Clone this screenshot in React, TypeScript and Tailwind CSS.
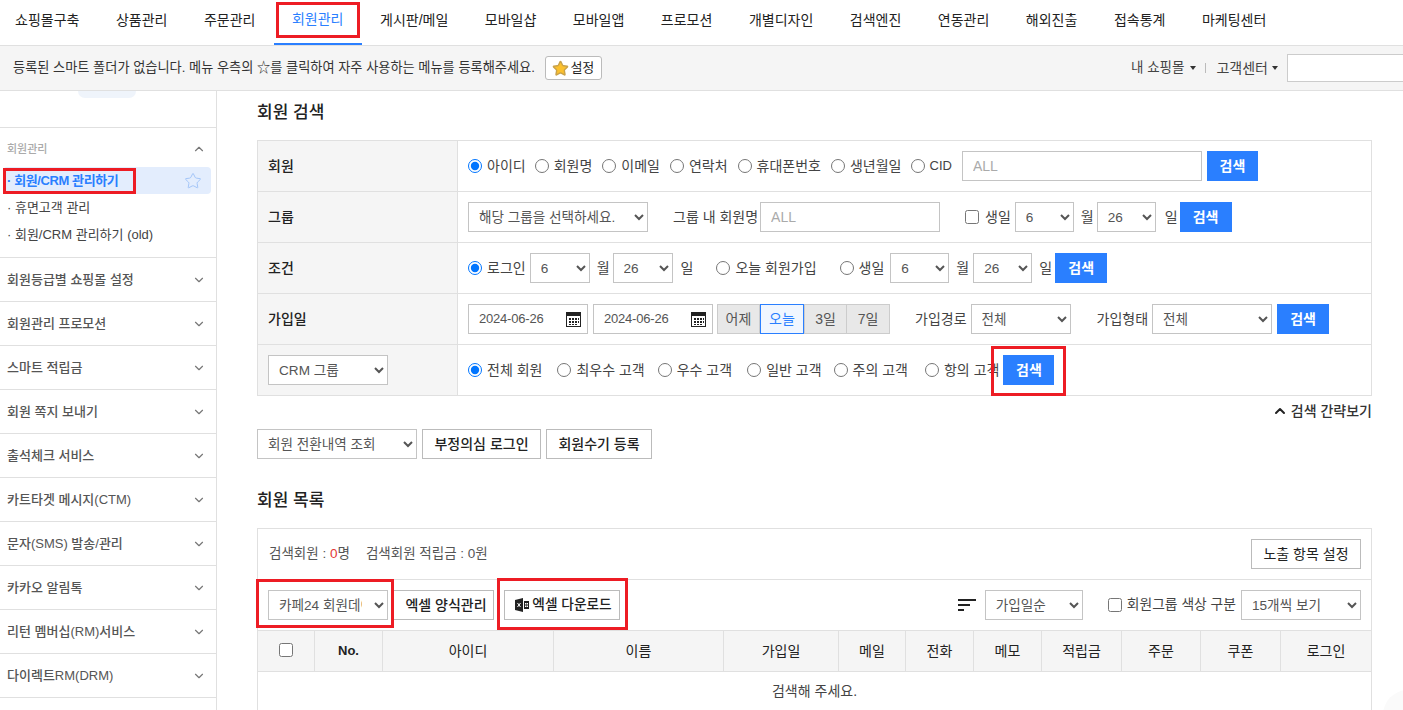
import { ChevronDown, ChevronUp, Star } from 'lucide-react'

const navItems = ['쇼핑몰구축', '상품관리', '주문관리', '회원관리', '게시판/메일', '모바일샵', '모바일앱', '프로모션', '개별디자인', '검색엔진', '연동관리', '해외진출', '접속통계', '마케팅센터']
const sideGroups = ['회원등급별 쇼핑몰 설정', '회원관리 프로모션', '스마트 적립금', '회원 쪽지 보내기', '출석체크 서비스', '카트타겟 메시지(CTM)', '문자(SMS) 발송/관리', '카카오 알림톡', '리턴 멤버십(RM)서비스', '다이렉트RM(DRM)']
const columns = ['No.', '아이디', '이름', '가입일', '메일', '전화', '메모', '적립금', '주문', '쿠폰', '로그인']

// annotation box drawn on top of the screenshot
function RedBox({ className }: { className: string }) {
  return <span className={`pointer-events-none absolute z-10 border-[3px] border-[#ed1c24] ${className}`} />
}

function Radio({ label, checked = false, className = '' }: { label: string; checked?: boolean; className?: string }) {
  return (
    <label className={`flex shrink-0 items-center gap-[5px] ${className}`}>
      <input type="radio" readOnly checked={checked} className="h-[14px] w-[14px]" />
      <span className="whitespace-nowrap">{label}</span>
    </label>
  )
}

function Select({ value, className = '' }: { value: string; className?: string }) {
  return (
    <select className={`h-[30px] shrink-0 border border-[#c4c4c4] bg-white pl-[6px] text-[13.6px] text-[#555] ${className}`} defaultValue={value}>
      <option>{value}</option>
    </select>
  )
}

function SearchButton({ className = '' }: { className?: string }) {
  return <button className={`h-[30px] shrink-0 bg-[#2a7fff] font-bold text-white ${className}`}>검색</button>
}

function OutlineButton({ children, className = '' }: { children: React.ReactNode; className?: string }) {
  return <button className={`flex h-[30px] shrink-0 items-center justify-center border border-[#bbb] bg-white font-medium text-[#222] ${className}`}>{children}</button>
}

function DateInput({ className = '' }: { className?: string }) {
  return (
    <div className={`relative flex h-[30px] w-[120px] shrink-0 items-center border border-[#c4c4c4] bg-white pl-[10px] text-[13px] tracking-[-0.2px] text-[#555] ${className}`}>
      2024-06-26
      <svg className="absolute right-[6px] top-[7px]" width="15" height="15" viewBox="0 0 15 15">
        <path d="M0 0h15v15H0z" fill="#222" />
        <path d="M1 4h13v10H1z" fill="#fff" />
        <path d="M3 6h2v2H3zM6 6h2v2H6zM9 6h2v2H9zM12 6h1v2h-1zM3 9h2v2H3zM6 9h2v2H6zM9 9h2v2H9zM12 9h1v2h-1zM3 12h2v1H3zM6 12h2v1H6zM9 12h2v1H9z" fill="#222" />
      </svg>
    </div>
  )
}

function SearchRow({ label, children, last = false }: { label: React.ReactNode; children: React.ReactNode; last?: boolean }) {
  return (
    <div className={`flex ${last ? 'h-[50px]' : 'h-[51px] border-b border-[#e0e0e0]'}`}>
      <div className="flex w-[200px] shrink-0 items-center border-r border-[#e0e0e0] bg-[#f5f5f5] pl-[10px] font-medium text-[#222]">{label}</div>
      <div className="flex min-w-0 flex-1 items-center pl-[10px]">{children}</div>
    </div>
  )
}

export default function App() {
  return (
    <div className="relative h-[710px] w-[1403px] overflow-hidden bg-white font-['Liberation_Sans','Noto_Sans_CJK_KR',sans-serif] text-[14px] text-[#444]">
      <nav className="flex h-[46px] border-b border-[#e0e0e0]">
        {navItems.map((item, i) => (
          <a
            key={item}
            className={`relative flex h-[45px] items-center whitespace-nowrap pb-[5px] ${i === 0 ? 'pl-[15px] pr-[18.25px]' : 'px-[18.25px]'} ${item === '회원관리' ? 'border-b-[2px] border-[#2a7fff] text-[#2a7fff]' : 'text-[#222]'}`}
          >
            {item}
            {item === '회원관리' && <RedBox className="left-[2px] right-[2px] top-[2px] h-[36px]" />}
          </a>
        ))}
      </nav>

      <div className="flex h-[45px] items-center border-b border-[#e0e0e0] bg-[#f5f5f5] pl-[13px]">
        <span className="whitespace-nowrap text-[13.2px] text-[#333]">등록된 스마트 폴더가 없습니다. 메뉴 우측의 ☆를 클릭하여 자주 사용하는 메뉴를 등록해주세요.</span>
        <button className="ml-[10px] flex h-[24px] w-[57px] shrink-0 items-center justify-center gap-px rounded-[3px] border border-[#bbb] bg-white text-[13px] text-[#222]">
          <Star size={17} className="fill-[#fbc02d] text-[#c9a24a]" />
          설정
        </button>
        <div className="ml-auto flex shrink-0 items-center text-[#444]">
          <span className="text-[13.5px]">내 쇼핑몰</span>
          <span className="ml-[6px] h-0 w-0 border-x-[3.5px] border-t-[4px] border-x-transparent border-t-[#333]" />
          <span className="ml-[9px] mr-[10px] h-[10px] w-px bg-[#bbb]" />
          <span>고객센터</span>
          <span className="ml-[4px] h-0 w-0 border-x-[3.5px] border-t-[4px] border-x-transparent border-t-[#333]" />
          <input className="ml-[9px] mr-[-20px] h-[28px] w-[136px] border border-[#ccc] bg-white" />
        </div>
      </div>

      <div className="flex h-[620px]">
        <aside className="h-full w-[217px] shrink-0 overflow-hidden border-r border-[#e0e0e0] text-[13px]">
          <div className="h-[37px] border-b border-[#e0e0e0]">
            <div className="ml-[78px] h-[7px] w-[58px] rounded-b-[8px] bg-[#eff4fb]" />
          </div>
          <div className="h-[130px] border-b border-[#e0e0e0]">
            <div className="flex h-[39px] items-center justify-between pl-[7px] pr-[10px] pt-[3px] text-[11px] font-medium text-[#aaa]">
              회원관리
              <ChevronUp size={14} className="text-[#777]" />
            </div>
            <div className="relative ml-[3px] flex h-[27px] w-[208px] items-center justify-between rounded-[4px] bg-[#e3edfd] pl-[4px] pr-[9px] font-bold tracking-[-0.4px] text-[#2a7fff]">
              <span>· 회원/CRM 관리하기</span>
              <Star size={18} strokeWidth={1} className="text-[#8fb8f5]" />
              <RedBox className="left-0 top-[1px] h-[26px] w-[133px]" />
            </div>
            <div className="flex h-[27px] items-center pl-[7px] text-[#444]">· 휴면고객 관리</div>
            <div className="flex h-[27px] items-center pl-[7px] text-[#444]">· 회원/CRM 관리하기 (old)</div>
          </div>
          {sideGroups.map((group) => (
            <div key={group} className="flex h-[44px] items-center justify-between border-b border-[#e0e0e0] pl-[7px] pr-[10px] font-medium text-[#555]">
              {group}
              <ChevronDown size={14} className="text-[#777]" />
            </div>
          ))}
        </aside>

        <main className="min-w-0 flex-1 pl-[40px] pr-[31px]">
          <h2 className="flex h-[49px] items-center pb-[5px] text-[17px] font-medium text-[#222]">회원 검색</h2>

          <div className="border border-[#e0e0e0]">
            <SearchRow label="회원">
              <Radio label="아이디" checked />
              <Radio label="회원명" className="ml-[9px]" />
              <Radio label="이메일" className="ml-[10px]" />
              <Radio label="연락처" className="ml-[10px]" />
              <Radio label="휴대폰번호" className="ml-[10px]" />
              <Radio label="생년월일" className="ml-[10px]" />
              <Radio label="CID" className="ml-[9px] text-[13px]" />
              <input placeholder="ALL" className="ml-[10px] h-[30px] w-[240px] shrink-0 border border-[#c4c4c4] pl-[10px] placeholder:text-[#aaa]" />
              <SearchButton className="ml-[5px] w-[51px]" />
            </SearchRow>
            <SearchRow label="그룹">
              <Select value="해당 그룹을 선택하세요." className="w-[180px]" />
              <span className="ml-[25px]">그룹 내 회원명</span>
              <input placeholder="ALL" className="ml-[2px] h-[30px] w-[180px] shrink-0 border border-[#c4c4c4] pl-[10px] placeholder:text-[#aaa]" />
              <input type="checkbox" className="ml-[25px] h-[14px] w-[14px]" />
              <span className="ml-[6px]">생일</span>
              <Select value="6" className="ml-[4px] w-[59px]" />
              <span className="ml-[7px]">월</span>
              <Select value="26" className="ml-[3px] w-[59px]" />
              <span className="ml-[9px]">일</span>
              <SearchButton className="ml-[2px] w-[52px]" />
            </SearchRow>
            <SearchRow label="조건">
              <Radio label="로그인" checked />
              <Select value="6" className="ml-[4px] w-[60px]" />
              <span className="ml-[7px]">월</span>
              <Select value="26" className="ml-[3px] w-[60px]" />
              <span className="ml-[8px]">일</span>
              <Radio label="오늘 회원가입" className="ml-[23px]" />
              <Radio label="생일" className="ml-[23px]" />
              <Select value="6" className="ml-[6px] w-[59px]" />
              <span className="ml-[7px]">월</span>
              <Select value="26" className="ml-[4px] w-[59px]" />
              <span className="ml-[7px]">일</span>
              <SearchButton className="ml-[3px] w-[52px]" />
            </SearchRow>
            <SearchRow label="가입일">
              <DateInput />
              <DateInput className="ml-[5px]" />
              <div className="ml-[4px] flex h-[30px] shrink-0">
                <span className="flex w-[43px] items-center justify-center border border-[#ccc] bg-[#e8e8e8] text-[#555]">어제</span>
                <span className="flex w-[44px] items-center justify-center border border-[#2a7fff] bg-[#f0f6ff] text-[#2a7fff]">오늘</span>
                <span className="flex w-[43px] items-center justify-center border border-[#ccc] bg-[#e8e8e8] text-[#555]">3일</span>
                <span className="flex w-[43px] items-center justify-center border border-l-0 border-[#ccc] bg-[#e8e8e8] text-[#555]">7일</span>
              </div>
              <span className="ml-[25px]">가입경로</span>
              <Select value="전체" className="ml-[4px] w-[100px]" />
              <span className="ml-[26px]">가입형태</span>
              <Select value="전체" className="ml-[4px] w-[120px]" />
              <SearchButton className="ml-[5px] w-[52px]" />
            </SearchRow>
            <SearchRow last label={<Select value="CRM 그룹" className="w-[120px] font-normal" />}>
              <Radio label="전체 회원" checked />
              <Radio label="최우수 고객" className="ml-[15px]" />
              <Radio label="우수 고객" className="ml-[13px]" />
              <Radio label="일반 고객" className="ml-[15px]" />
              <Radio label="주의 고객" className="ml-[12px]" />
              <Radio label="항의 고객" className="ml-[17px]" />
              <div className="relative ml-[4px]">
                <SearchButton className="block w-[51px]" />
                <RedBox className="left-[-12px] top-[-9px] h-[50px] w-[75px]" />
              </div>
            </SearchRow>
          </div>

          <div className="flex h-[30px] items-center justify-end font-medium text-[#333]">
            <ChevronUp size={16} strokeWidth={3} className="mr-[3px] text-[#222]" />
            검색 간략보기
          </div>

          <div className="mt-[3px] flex gap-[5px]">
            <Select value="회원 전환내역 조회" className="w-[160px]" />
            <OutlineButton className="w-[119px]">부정의심 로그인</OutlineButton>
            <OutlineButton className="w-[106px]">회원수기 등록</OutlineButton>
          </div>

          <h2 className="mt-[27px] flex h-[30px] items-center text-[17px] font-medium text-[#222]">회원 목록</h2>

          <div className="mt-[12px] border-x border-t border-[#e0e0e0]">
            <div className="flex h-[51px] items-center justify-between border-b border-[#e0e0e0] pl-[11px] pr-[10px]">
              <div className="flex gap-[16px] text-[13.5px] text-[#555]">
                <span>검색회원 : <span className="text-[#e53935]">0</span>명</span>
                <span>검색회원 적립금 : 0원</span>
              </div>
              <OutlineButton className="w-[110px] font-normal">노출 항목 설정</OutlineButton>
            </div>
            <div className="flex h-[50px] items-center pl-[10px] pr-[10px]">
              <div className="relative">
                <Select value="카페24 회원데이터" className="block w-[120px] pr-[9px]" />
                <RedBox className="left-[-12px] top-[-11px] h-[49px] w-[138px]" />
              </div>
              <OutlineButton className="ml-[5px] w-[101px] pl-[5px]">엑셀 양식관리</OutlineButton>
              <div className="relative ml-[10px]">
                <OutlineButton className="w-[116px] gap-[3px] pl-[3px] text-[13.7px]">
                  <svg width="14" height="14" viewBox="0 0 14 14">
                    <path d="M0 2l8-2v14l-8-2z" fill="#222" />
                    <path d="M2.5 5l3 4M5.5 5l-3 4" stroke="#fff" strokeWidth="1" />
                    <path d="M9 3h5v8H9zM10 5h1.5v1.5H10zM12 5h1v1.5h-1zM10 7.5h1.5V9H10zM12 7.5h1V9h-1z" fill="#222" fillRule="evenodd" />
                  </svg>
                  엑셀 다운로드
                </OutlineButton>
                <RedBox className="left-[-7px] top-[-12px] h-[52px] w-[131px]" />
              </div>
              <svg className="ml-auto" width="18" height="13" viewBox="0 0 18 13">
                <path d="M0 0h18v2H0zM0 5h12v2H0zM0 10h6v2H0z" fill="#222" />
              </svg>
              <Select value="가입일순" className="ml-[9px] w-[98px]" />
              <input type="checkbox" className="ml-[25px] h-[14px] w-[14px]" />
              <span className="ml-[5px] whitespace-nowrap text-[13.8px]">회원그룹 색상 구분</span>
              <Select value="15개씩 보기" className="ml-[5px] w-[120px]" />
            </div>
            <div className="grid h-[42px] grid-cols-[57px_68px_171px_170px_115px_67px_68px_68px_80px_79px_80px_1fr] border-y border-[#e0e0e0] bg-[#f5f5f5] text-[#222]">
              <div className="flex items-center justify-center border-r border-[#e0e0e0] pb-[3px]">
                <input type="checkbox" className="h-[14px] w-[14px]" />
              </div>
              {columns.map((col, i) => (
                <div key={col} className={`flex items-center justify-center ${i === 0 ? 'text-[13px] font-bold' : ''} ${i < columns.length - 1 ? 'border-r border-[#e0e0e0]' : ''}`}>
                  {col}
                </div>
              ))}
            </div>
            <div className="flex h-[60px] justify-center pt-[9px] text-[#444]">검색해 주세요.</div>
          </div>
        </main>
      </div>

      <div className="absolute bottom-[-30px] right-[-30px] h-[50px] w-[50px] rounded-full bg-[#fafafa]" />
    </div>
  )
}
